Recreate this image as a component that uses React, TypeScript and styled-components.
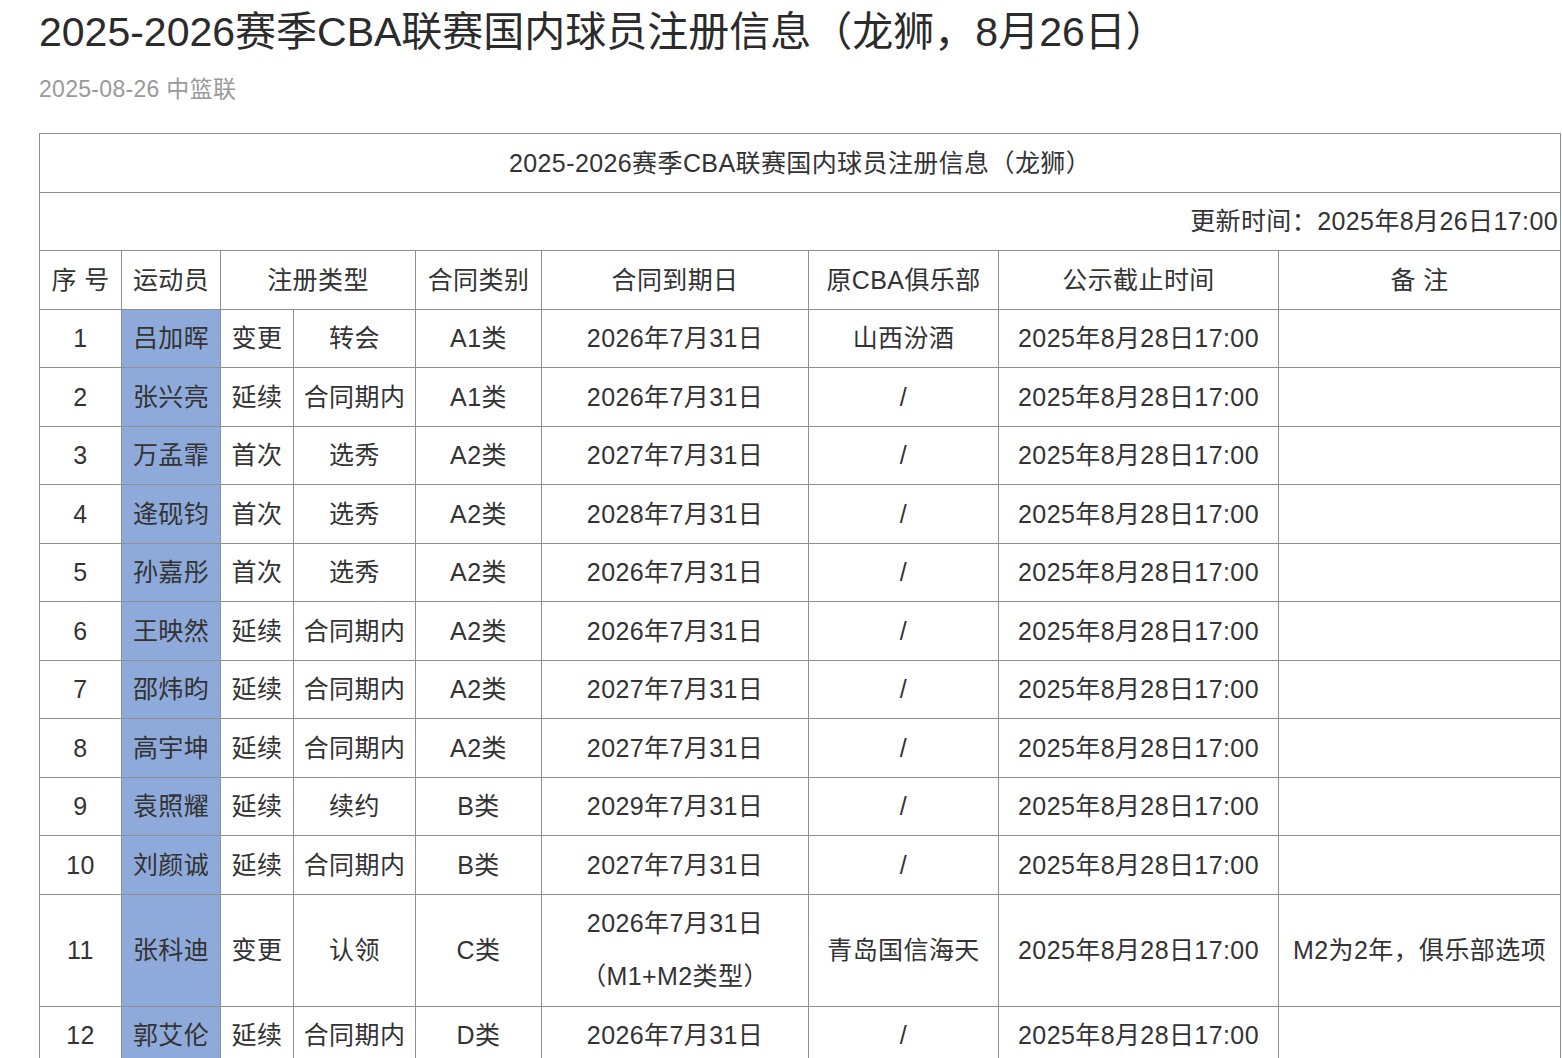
import React from 'react';
import styled, { createGlobalStyle } from 'styled-components';

const GlobalStyle = createGlobalStyle`
  html, body {
    margin: 0;
    padding: 0;
    background: #fff;
  }
  body {
    font-family: "Liberation Sans", "Noto Sans CJK SC", sans-serif;
    color: #333;
  }
`;

const Page = styled.div`
  padding: 8px 0 0 39px;
  overflow: hidden;
`;

const Title = styled.h1`
  margin: 0;
  font-size: 41px;
  line-height: 48px;
  font-weight: normal;
  color: #2b2b2b;
  white-space: nowrap;
`;

const Meta = styled.div`
  margin-top: 18px;
  font-size: 23px;
  line-height: 30px;
  letter-spacing: 0.3px;
  color: #999;
`;

const Table = styled.table`
  margin-top: 29px;
  width: 1521px;
  border-collapse: collapse;
  table-layout: fixed;
  font-size: 25px;
  letter-spacing: 0.4px;
  color: #333;
`;

const Cell = styled.td<{ $align?: 'left' | 'right' | 'center'; $blue?: boolean }>`
  border: 1px solid #8f8f8f;
  padding: 2.5px 2px;
  line-height: 52.5px;
  text-align: ${p => p.$align || 'center'};
  background: ${p => (p.$blue ? '#8eaadb' : 'transparent')};
  white-space: nowrap;
  vertical-align: middle;
`;

const Wrap = styled.div`
  line-height: 53px;
`;

type Row = {
  no: number;
  name: string;
  kind: string;
  sub: string;
  cls: string;
  due: React.ReactNode;
  club: string;
  until: string;
  note?: string;
};

const END = '2025年8月28日17:00';

const rows: Row[] = [
  { no: 1, name: '吕加晖', kind: '变更', sub: '转会', cls: 'A1类', due: '2026年7月31日', club: '山西汾酒', until: END },
  { no: 2, name: '张兴亮', kind: '延续', sub: '合同期内', cls: 'A1类', due: '2026年7月31日', club: '/', until: END },
  { no: 3, name: '万孟霏', kind: '首次', sub: '选秀', cls: 'A2类', due: '2027年7月31日', club: '/', until: END },
  { no: 4, name: '逄砚钧', kind: '首次', sub: '选秀', cls: 'A2类', due: '2028年7月31日', club: '/', until: END },
  { no: 5, name: '孙嘉彤', kind: '首次', sub: '选秀', cls: 'A2类', due: '2026年7月31日', club: '/', until: END },
  { no: 6, name: '王映然', kind: '延续', sub: '合同期内', cls: 'A2类', due: '2026年7月31日', club: '/', until: END },
  { no: 7, name: '邵炜昀', kind: '延续', sub: '合同期内', cls: 'A2类', due: '2027年7月31日', club: '/', until: END },
  { no: 8, name: '高宇坤', kind: '延续', sub: '合同期内', cls: 'A2类', due: '2027年7月31日', club: '/', until: END },
  { no: 9, name: '袁照耀', kind: '延续', sub: '续约', cls: 'B类', due: '2029年7月31日', club: '/', until: END },
  { no: 10, name: '刘颜诚', kind: '延续', sub: '合同期内', cls: 'B类', due: '2027年7月31日', club: '/', until: END },
  {
    no: 11,
    name: '张科迪',
    kind: '变更',
    sub: '认领',
    cls: 'C类',
    due: (
      <Wrap>
        2026年7月31日
        <br />
        （M1+M2类型）
      </Wrap>
    ),
    club: '青岛国信海天',
    until: END,
    note: 'M2为2年，俱乐部选项',
  },
  { no: 12, name: '郭艾伦', kind: '延续', sub: '合同期内', cls: 'D类', due: '2026年7月31日', club: '/', until: END },
];

const widths = [82, 99, 73, 122, 126, 267, 190, 280, 282];

export default function App() {
  return (
    <Page>
      <GlobalStyle />
      <Title>2025-2026赛季CBA联赛国内球员注册信息（龙狮，8月26日）</Title>
      <Meta>2025-08-26 中篮联</Meta>
      <Table>
        <colgroup>
          {widths.map((w, i) => (
            <col key={i} style={{ width: w }} />
          ))}
        </colgroup>
        <tbody>
          <tr>
            <Cell colSpan={9}>2025-2026赛季CBA联赛国内球员注册信息（龙狮）</Cell>
          </tr>
          <tr>
            <Cell colSpan={9} $align="right">
              更新时间：2025年8月26日17:00
            </Cell>
          </tr>
          <tr>
            <Cell>序 号</Cell>
            <Cell>运动员</Cell>
            <Cell colSpan={2}>注册类型</Cell>
            <Cell>合同类别</Cell>
            <Cell>合同到期日</Cell>
            <Cell>原CBA俱乐部</Cell>
            <Cell>公示截止时间</Cell>
            <Cell>备 注</Cell>
          </tr>
          {rows.map(r => (
            <tr key={r.no}>
              <Cell>{r.no}</Cell>
              <Cell $blue>{r.name}</Cell>
              <Cell>{r.kind}</Cell>
              <Cell>{r.sub}</Cell>
              <Cell>{r.cls}</Cell>
              <Cell>{r.due}</Cell>
              <Cell>{r.club}</Cell>
              <Cell>{r.until}</Cell>
              <Cell>{r.note}</Cell>
            </tr>
          ))}
        </tbody>
      </Table>
    </Page>
  );
}
